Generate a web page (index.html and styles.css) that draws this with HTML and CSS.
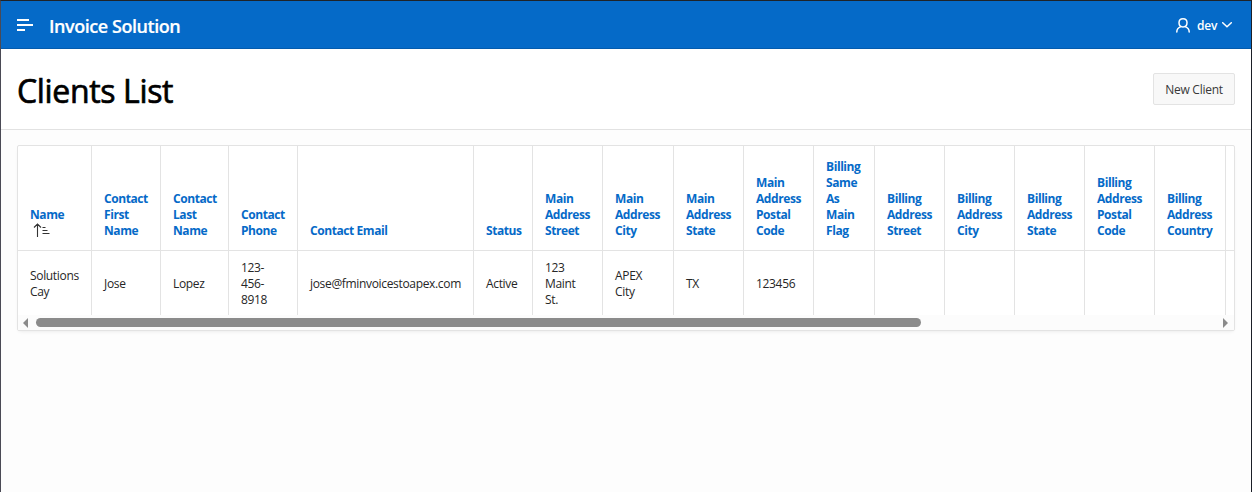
FILE: index.html
```
<!DOCTYPE html>
<html lang="en">
<head>
<meta charset="utf-8">
<title>Clients List</title>
<link rel="stylesheet" href="styles.css">
</head>
<body>
<div class="app">
  <header class="topbar">
    <svg class="menu-icon" width="16" height="12" viewBox="0 0 16 12"><path d="M0 1h12M0 6h16M0 11h8" fill="none" stroke="#fff" stroke-width="2"/></svg>
    <span class="brand">Invoice Solution</span>
    <div class="user">
      <svg class="user-icon" width="14" height="15" viewBox="0 0 14 15"><g fill="none" stroke="#fff" stroke-width="1.5" stroke-linecap="round"><path d="M7 .8c2.4 0 4 1.7 4 4s-1.6 4.1-4 4.1-4-1.8-4-4.1 1.600-4 4-4z"/><path d="M5 8.600C2.400 9.500.8 11.300.8 14M9 8.600c2.600.900 4.200 2.700 4.200 5.400"/></g></svg>
      <span class="user-name">dev</span>
      <svg width="10" height="6" viewBox="0 0 10 6"><path d="M.7.700L5 4.800 9.300.700" fill="none" stroke="#fff" stroke-width="1.500" stroke-linecap="round"/></svg>
    </div>
  </header>
  <div class="titlebar">
    <h1 class="title">Clients List</h1>
    <button class="btn" type="button"><span class="btn-label">New Client</span></button>
  </div>
  <main class="content">
    <div class="report">
      <div class="grid head">
        <div class="th"><span>Name</span><svg class="sort" width="17" height="16" viewBox="0 0 17 16"><path d="M4.500 14V1M1 4.500L4.500 1 8 4.500M9.500 4.500h3M9.500 7.500h5M9.500 10.500h7" fill="none" stroke="#333" stroke-width="1.100"/></svg></div>
        <div class="th">Contact<br>First<br>Name</div>
        <div class="th">Contact<br>Last<br>Name</div>
        <div class="th">Contact<br>Phone</div>
        <div class="th">Contact Email</div>
        <div class="th">Status</div>
        <div class="th">Main<br>Address<br>Street</div>
        <div class="th">Main<br>Address<br>City</div>
        <div class="th">Main<br>Address<br>State</div>
        <div class="th">Main<br>Address<br>Postal<br>Code</div>
        <div class="th">Billing<br>Same<br>As<br>Main<br>Flag</div>
        <div class="th">Billing<br>Address<br>Street</div>
        <div class="th">Billing<br>Address<br>City</div>
        <div class="th">Billing<br>Address<br>State</div>
        <div class="th">Billing<br>Address<br>Postal<br>Code</div>
        <div class="th">Billing<br>Address<br>Country</div>
      </div>
      <div class="grid row">
        <div class="td">Solutions<br>Cay</div>
        <div class="td">Jose</div>
        <div class="td">Lopez</div>
        <div class="td">123-<br>456-<br>8918</div>
        <div class="td">jose@fminvoicestoapex.com</div>
        <div class="td">Active</div>
        <div class="td">123<br>Maint<br>St.</div>
        <div class="td">APEX<br>City</div>
        <div class="td">TX</div>
        <div class="td">123456</div>
        <div class="td"></div>
        <div class="td"></div>
        <div class="td"></div>
        <div class="td"></div>
        <div class="td"></div>
        <div class="td"></div>
      </div>
      <div class="scrollbar">
        <svg width="5" height="10" viewBox="0 0 5 10"><path d="M5 0v10L0 5z" fill="#8b8b8b"/></svg>
        <div class="track"><div class="thumb"></div></div>
        <svg width="5" height="10" viewBox="0 0 5 10"><path d="M0 0v10l5-5z" fill="#8b8b8b"/></svg>
      </div>
    </div>
  </main>
</div>
</body>
</html>
```
FILE: styles.css
```
* { box-sizing: border-box; }
body {
  margin: 0;
  font-family: "Segoe UI", "Open Sans", "Noto Sans", sans-serif;
  font-size: 12px;
  line-height: 16px;
  color: #262626;
}
.app {
  height: 492px;
  background: #fdfdfd;
  border-top: 1px solid #1f2329;
  border-left: 1px solid #4a4a55;
  border-right: 1px solid #1b1f27;
  overflow: hidden;
}
svg { display: block; flex: none; }
.topbar {
  display: flex;
  align-items: center;
  height: 48px;
  padding: 0 19px 0 16px;
  background: #056ac8;
  border-bottom: 1px solid #045bad;
  color: #fff;
}
.brand {
  margin-left: 16px;
  padding-top: 2px;
  font-size: 18px;
  line-height: 24px;
  font-weight: 600;
  letter-spacing: -0.45px;
  -webkit-text-stroke: 0.2px #fff;
}
.user {
  display: flex;
  align-items: center;
  margin-left: auto;
  padding-top: 1px;
}
.user-name {
  margin: 0 5px 0 7px;
  padding-top: 1px;
  font-weight: 600;
  letter-spacing: -0.3px;
}
.titlebar {
  display: flex;
  align-items: center;
  justify-content: space-between;
  height: 81px;
  padding: 0 16px;
  background: #fff;
  border-bottom: 1px solid #e2e2e2;
}
.title {
  margin: 0;
  padding-top: 3px;
  font-size: 32px;
  line-height: 40px;
  font-weight: 500;
  letter-spacing: -0.35px;
  color: #000;
  -webkit-text-stroke: 0.7px #000;
}
.btn {
  width: 82px;
  height: 32px;
  padding: 2px 0 0;
  border: 1px solid #e3e3e3;
  border-radius: 2px;
  background: #f8f8f8;
  color: #383838;
  font: inherit;
  white-space: nowrap;
}
.btn-label { letter-spacing: -0.25px; }
.content { padding: 15px 16px; }
.report {
  height: 186px;
  border: 1px solid #e3e3e3;
  border-radius: 2px;
  background: #fff;
  box-shadow: 0 2px 4px -2px rgba(0, 0, 0, 0.1);
  overflow: hidden;
}
.grid {
  display: grid;
  grid-template-columns: 74px 69px 68px 69px 176px 59px 70px 71px 70px 70px 61px 70px 70px 70px 70px 71px;
}
.head {
  height: 105px;
  border-bottom: 1px solid #e3e3e3;
}
.row { height: 64px; }
.th, .td {
  display: grid;
  padding-left: 12px;
  border-right: 1px solid #e3e3e3;
  white-space: nowrap;
}
.th {
  align-content: end;
  justify-content: start;
  padding-bottom: 11px;
  font-weight: 700;
  letter-spacing: -0.42px;
  color: #056ac8;
}
.sort { margin-left: 3px; }
.td {
  align-content: center;
  padding-top: 2px;
  letter-spacing: -0.33px;
}
.scrollbar {
  display: flex;
  align-items: center;
  height: 15px;
  padding: 0 6px 0 5px;
  background: #fcfcfc;
}
.track {
  flex: 1;
  padding-left: 8px;
}
.thumb {
  width: 885px;
  height: 9px;
  border-radius: 5px;
  background: #8b8b8b;
}
```
